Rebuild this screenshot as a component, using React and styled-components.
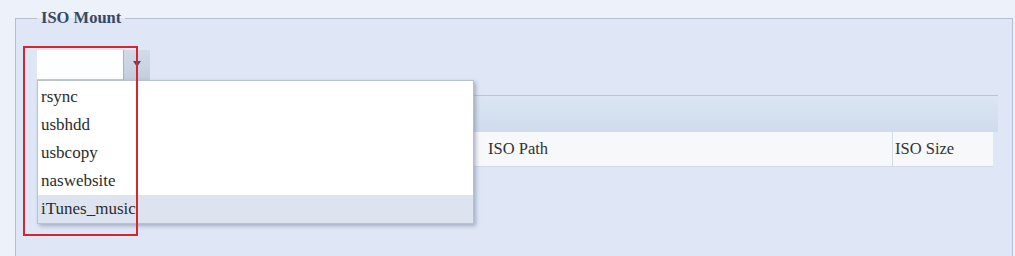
import React from 'react';
import styled, { createGlobalStyle } from 'styled-components';

const GlobalStyle = createGlobalStyle`
  html, body {
    margin: 0;
    padding: 0;
    background: #edf1f9;
    font-family: "Liberation Serif", "Times New Roman", serif;
    overflow: hidden;
  }
`;

const Page = styled.div`
  width: 1015px;
  height: 256px;
  padding-top: 10px;
  box-sizing: border-box;
`;

// the panel runs on past the bottom of the shot, so no bottom border here
const Fieldset = styled.fieldset`
  margin: 0 2px 0 15px;
  padding: 24px 14px 0 21px;
  height: 246px;
  border: 1px solid #b4bfcf;
  border-bottom: none;
  background: #dfe7f7;
  box-sizing: border-box;
`;

const Legend = styled.legend`
  padding: 0 4px;
  font-size: 16.5px;
  line-height: 16px;
  font-weight: bold;
  color: #3a4862;
`;

const SelectWrap = styled.div`
  position: relative;
  display: flex;
  width: 113px;
  height: 30px;
`;

const SelectInput = styled.div`
  width: 87px;
  background: #fdfeff;
  border-bottom: 1px solid #c5cedb;
`;

const SelectButton = styled.div`
  width: 26px;
  display: flex;
  align-items: center;
  justify-content: center;
  background: linear-gradient(#d2dbe8, #c3cedd);
  border-left: 1px solid #a7b2c2;
`;

const Arrow = styled.span`
  width: 0;
  height: 0;
  border-left: 4px solid transparent;
  border-right: 4px solid transparent;
  border-top: 6px solid #4a4f5c;
  margin-top: -2px;
`;

const Menu = styled.ul`
  position: absolute;
  top: 100%;
  left: 0;
  z-index: 3;
  width: 437px;
  margin: 0;
  padding: 2px 0 0;
  list-style: none;
  background: #ffffff;
  border: 1px solid #b7c1cf;
  box-shadow: 2px 2px 4px rgba(90, 105, 130, 0.45);
  box-sizing: border-box;
`;

const MenuItem = styled.li`
  height: 28px;
  line-height: 28px;
  padding-left: 3px;
  font-size: 17px;
  color: #2c2c2c;
  background: ${(p) => (p.$active ? '#dde4ef' : 'transparent')};
`;

const Highlight = styled.div`
  position: absolute;
  left: -14px;
  top: -4px;
  width: 115px;
  height: 190px;
  border: 2px solid #d3262f;
  box-sizing: border-box;
  z-index: 4;
  pointer-events: none;
`;

const Table = styled.div`
  margin-top: 15px;
  width: 961px;
`;

const HeaderBar = styled.div`
  height: 37px;
  border-top: 1px solid #b9c5d6;
  background: linear-gradient(#dbe5f3, #cfdced);
  box-sizing: border-box;
`;

const Row = styled.div`
  display: grid;
  grid-template-columns: 441px 414px 101px;
  height: 35px;
  background: #f7f8fa;
  border-bottom: 1px solid #d2d9e4;
  box-sizing: border-box;
  width: 956px;
`;

const Cell = styled.div`
  padding-left: ${(p) => (p.$pad ? p.$pad : 10)}px;
  line-height: 34px;
  font-size: 16.5px;
  color: #333;
  border-left: ${(p) => (p.$divider ? '1px solid #d5dbe4' : 'none')};
`;

const items = ['rsync', 'usbhdd', 'usbcopy', 'naswebsite', 'iTunes_music'];

export default function App() {
  return (
    <>
      <GlobalStyle />
      <Page>
        <Fieldset>
          <Legend>ISO Mount</Legend>
          <SelectWrap>
            <SelectInput />
            <SelectButton>
              <Arrow />
            </SelectButton>
            <Menu>
              {items.map((name, i) => (
                <MenuItem key={name} $active={i === items.length - 1}>
                  {name}
                </MenuItem>
              ))}
            </Menu>
            <Highlight />
          </SelectWrap>
          <Table>
            <HeaderBar />
            <Row>
              <Cell />
              <Cell>ISO Path</Cell>
              <Cell $divider $pad={2}>ISO Size</Cell>
            </Row>
          </Table>
        </Fieldset>
      </Page>
    </>
  );
}
